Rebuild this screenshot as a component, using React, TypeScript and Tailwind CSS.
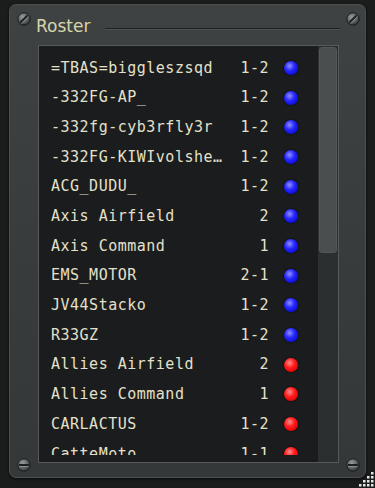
import React from "react";

type Entry = { name: string; score: string; side: "axis" | "allies" };

const roster: Entry[] = [
  { name: "=TBAS=biggleszsqd", score: "1-2", side: "axis" },
  { name: "-332FG-AP_", score: "1-2", side: "axis" },
  { name: "-332fg-cyb3rfly3r", score: "1-2", side: "axis" },
  { name: "-332FG-KIWIvolsheimer", score: "1-2", side: "axis" },
  { name: "ACG_DUDU_", score: "1-2", side: "axis" },
  { name: "Axis Airfield", score: "2", side: "axis" },
  { name: "Axis Command", score: "1", side: "axis" },
  { name: "EMS_MOTOR", score: "2-1", side: "axis" },
  { name: "JV44Stacko", score: "1-2", side: "axis" },
  { name: "R33GZ", score: "1-2", side: "axis" },
  { name: "Allies Airfield", score: "2", side: "allies" },
  { name: "Allies Command", score: "1", side: "allies" },
  { name: "CARLACTUS", score: "1-2", side: "allies" },
  { name: "CatteMoto", score: "1-1", side: "allies" },
];

const Screw = ({ angle }: { angle: number }) => (
  <svg width="14" height="14" viewBox="0 0 14 14">
    <defs>
      <radialGradient id={"sg" + angle} cx="40%" cy="35%" r="70%">
        <stop offset="0%" stopColor="#9a9d9d" />
        <stop offset="60%" stopColor="#5c6060" />
        <stop offset="100%" stopColor="#2a2c2c" />
      </radialGradient>
    </defs>
    <circle cx="7" cy="7" r="6.2" fill={"url(#sg" + angle + ")"} stroke="#1a1c1c" strokeWidth="1" />
    <g transform={`rotate(${angle} 7 7)`}>
      <rect x="2" y="6" width="10" height="2" fill="#1e2020" />
      <rect x="2" y="8" width="10" height="0.8" fill="#a8abab" opacity="0.6" />
    </g>
  </svg>
);

const Grip = () => {
  const dots: [number, number][] = [];
  for (let r = 0; r < 4; r++) {
    for (let c = 3 - r; c < 4; c++) dots.push([c, r]);
  }
  return (
    <svg width="16" height="16" viewBox="0 0 16 16">
      {dots.map(([c, r], i) => (
        <rect key={i} x={c * 4 + 1} y={r * 4 + 1} width="2.5" height="2.5" fill="#e6e6e6" />
      ))}
    </svg>
  );
};

const Row = ({ e }: { e: Entry }) => (
  <div className="flex items-center h-[29.7px] pl-[12px]">
    <span className="w-[174px] truncate">{e.name}</span>
    <span className="w-[44px] text-right">{e.score}</span>
    <span
      className={
        e.side === "axis"
          ? "ml-[15px] w-[14px] h-[14px] rounded-full shadow-[0_0_2px_rgba(0,0,0,0.8)] bg-[radial-gradient(circle_at_40%_35%,#9090ff_0%,#2626ff_40%,#0a0ad8_80%,#05058a_100%)]"
          : "ml-[15px] w-[14px] h-[14px] rounded-full shadow-[0_0_2px_rgba(0,0,0,0.8)] bg-[radial-gradient(circle_at_40%_35%,#ff8e8e_0%,#ff1c1c_40%,#e00000_80%,#860000_100%)]"
      }
    />
  </div>
);

export default function App() {
  return (
    <div className="relative w-[375px] h-[488px] bg-[#1b1d1d] pt-[4px] pl-[9px] overflow-hidden">
      <div className="relative w-[357px] h-[474px] rounded-[7px] bg-[linear-gradient(180deg,#3f4242,#383b3b_60%,#353838)] border border-[#4a4e4e] shadow-[0_1px_3px_rgba(0,0,0,0.7)]">
        {/* header */}
        <div className="flex items-center h-[40px] pl-[26px] pt-[3px]">
          <span className="text-[17px] text-[#d8d4ac] font-['DejaVu_Sans',sans-serif]">Roster</span>
          <div className="ml-[15px] mt-[4px] w-[235px] h-[2px] border-t border-[#1f2121] border-b border-b-[#4e5252]" />
        </div>
        <div className="absolute left-[7px] top-[7px]">
          <Screw angle={-45} />
        </div>
        <div className="absolute right-[5px] top-[7px]">
          <Screw angle={-45} />
        </div>
        <div className="absolute left-[7px] bottom-[5px]">
          <Screw angle={0} />
        </div>
        <div className="absolute right-[5px] bottom-[5px]">
          <Screw angle={0} />
        </div>

        {/* list */}
        <div className="ml-[28px] w-[301px] h-[418px] flex border border-[#565a5b] bg-[#1a1c1d] overflow-hidden">
          <div className="flex-1 my-[7px] overflow-hidden text-[15px] tracking-[0.5px] text-[#e4e0ca] font-['DejaVu_Sans_Mono',monospace]">
            {roster.map((e) => (
              <Row key={e.name} e={e} />
            ))}
          </div>
          <div className="w-[21px] bg-[#2c2f30] border-l border-[#1a1c1d] pt-[1px] px-[1px]">
            <div className="h-[206px] rounded-[3px] bg-[#4a4e4f] border border-[#545859]" />
          </div>
        </div>
      </div>
      <div className="absolute right-[1px] bottom-[1px]">
        <Grip />
      </div>
    </div>
  );
}
